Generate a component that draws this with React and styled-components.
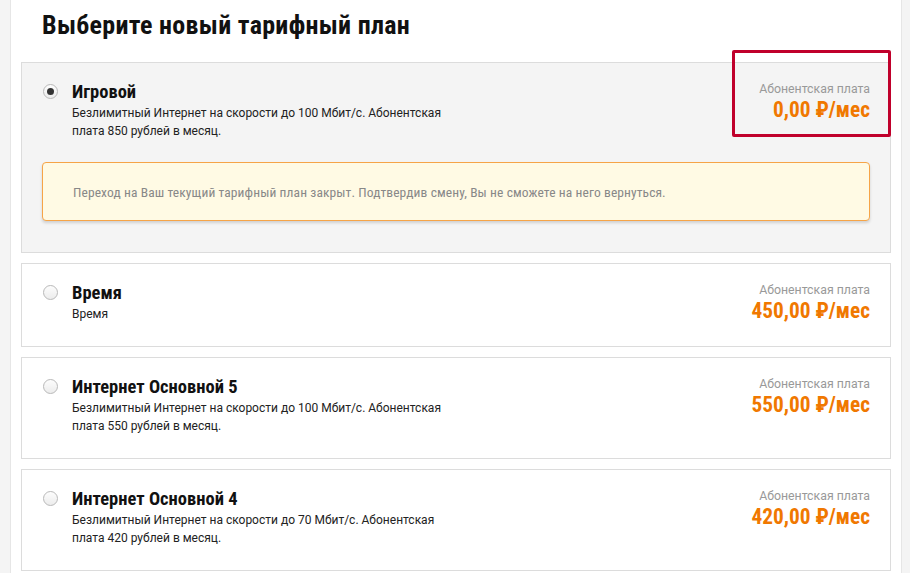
import React from "react";
import styled, { createGlobalStyle } from "styled-components";

const Global = createGlobalStyle`
  html, body { margin: 0; padding: 0; }
  body { background: #f4f4f4; font-family: Roboto, "Liberation Sans", sans-serif; }
`;

const Panel = styled.div`
  box-sizing: border-box;
  margin-left: 10px;
  width: 892px;
  min-height: 573px;
  background: #fff;
  border-left: 1px solid #e6e6e6;
  border-right: 1px solid #e6e6e6;
  padding: 0 10px;
`;

const Heading = styled.h1`
  margin: 0;
  padding: 7px 0 0 21px;
  height: 62px;
  box-sizing: border-box;
  font-family: Roboto, sans-serif;
  font-stretch: 85%;
  font-weight: 700;
  font-size: 26px;
  letter-spacing: 0.3px;
  line-height: 36px;
  color: #111;
`;

const List = styled.div`
  display: flex;
  flex-direction: column;
  gap: 10px;
`;

const Card = styled.div`
  position: relative;
  border: 1px solid #dcdcdc;
  background: ${(p) => (p.$active ? "#f4f4f4" : "#fff")};
  padding: 17px 20px 23px 20px;
`;

const Row = styled.div`
  display: flex;
  align-items: flex-start;
`;

const RadioCell = styled.div`
  width: 30px;
  flex: none;
  padding-top: 4px;
`;

const Radio = styled.span`
  display: flex;
  align-items: center;
  justify-content: center;
  width: 15px;
  height: 15px;
  margin-left: 1px;
  border-radius: 50%;
  border: 1px solid #b9b9b9;
  background: linear-gradient(#fdfdfd, #ececec);
  box-sizing: border-box;
  &::after {
    content: "";
    display: ${(p) => (p.$checked ? "block" : "none")};
    width: 7px;
    height: 7px;
    border-radius: 50%;
    background: #333;
  }
`;

const Info = styled.div`
  flex: 1;
`;

const Title = styled.div`
  font-family: Roboto, sans-serif;
  font-stretch: 85%;
  font-weight: 700;
  font-size: 18.5px;
  line-height: 24px;
  color: #111;
`;

const Desc = styled.div`
  font-size: 12px;
  line-height: 18px;
  color: #222;
  max-width: 380px;
`;

const Price = styled.div`
  text-align: right;
  flex: none;
`;

const PriceLabel = styled.div`
  font-size: 12.3px;
  line-height: 18px;
  color: #999;
`;

const PriceValue = styled.div`
  font-family: Roboto, sans-serif;
  font-stretch: 85%;
  font-weight: 700;
  font-size: 21.3px;
  line-height: 24px;
  color: #f07800;
`;

const Alert = styled.div`
  margin: 22px 0 8px;
  padding: 20px 30px 19px;
  background: #fffae4;
  border: 1px solid #f6a447;
  border-radius: 4px;
  box-shadow: 0 2px 3px rgba(0, 0, 0, 0.15);
  font-size: 13.5px;
  font-stretch: 85%;
  letter-spacing: 0.1px;
  line-height: 18px;
  color: #888;
`;

const Highlight = styled.div`
  position: absolute;
  left: 710px;
  top: -13px;
  width: 159px;
  height: 87px;
  border: 3px solid #c0002b;
  border-radius: 2px;
  box-sizing: border-box;
`;

const plans = [
  {
    name: "Игровой",
    desc: "Безлимитный Интернет на скорости до 100 Мбит/с. Абонентская плата 850 рублей в месяц.",
    price: "0,00",
    active: true,
  },
  { name: "Время", desc: "Время", price: "450,00" },
  {
    name: "Интернет Основной 5",
    desc: "Безлимитный Интернет на скорости до 100 Мбит/с. Абонентская плата 550 рублей в месяц.",
    price: "550,00",
  },
  {
    name: "Интернет Основной 4",
    desc: "Безлимитный Интернет на скорости до 70 Мбит/с. Абонентская плата 420 рублей в месяц.",
    price: "420,00",
  },
];

export default function App() {
  return (
    <>
      <Global />
      <Panel>
        <Heading>Выберите новый тарифный план</Heading>
        <List>
          {plans.map((p) => (
            <Card key={p.name} $active={p.active}>
              <Row>
                <RadioCell>
                  <Radio $checked={p.active} />
                </RadioCell>
                <Info>
                  <Title>{p.name}</Title>
                  <Desc>{p.desc}</Desc>
                </Info>
                <Price>
                  <PriceLabel>Абонентская плата</PriceLabel>
                  <PriceValue>{p.price} ₽/мес</PriceValue>
                </Price>
              </Row>
              {p.active && (
                <Alert>
                  Переход на Ваш текущий тарифный план закрыт. Подтвердив смену, Вы не сможете на него вернуться.
                </Alert>
              )}
              {p.active && <Highlight />}
            </Card>
          ))}
        </List>
      </Panel>
    </>
  );
}
